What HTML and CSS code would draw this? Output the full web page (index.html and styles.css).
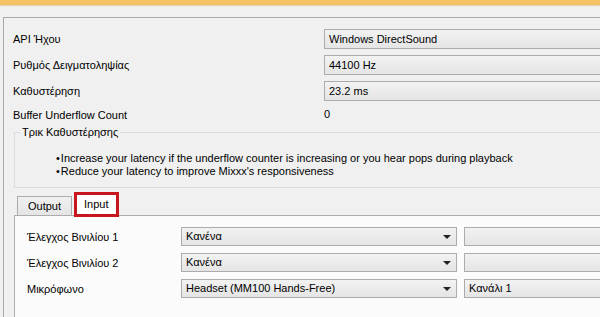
FILE: index.html
```html
<!DOCTYPE html>
<html lang="el">
<head>
    <meta charset="UTF-8">
    <meta name="viewport" content="width=device-width, initial-scale=1.0">
    <title>Ήχος</title>
    <link rel="stylesheet" href="styles.css">
</head>
<body>
    <div class="titlebar"></div>
    <div class="panel">
        <div class="form">
            <div class="label">API Ήχου</div>
            <div class="combo">Windows DirectSound</div>
            <div class="label">Ρυθμός Δειγματοληψίας</div>
            <div class="combo">44100 Hz</div>
            <div class="label">Καθυστέρηση</div>
            <div class="combo">23.2 ms</div>
            <div class="label short">Buffer Underflow Count</div>
            <div class="value">0</div>
        </div>

        <fieldset class="tips">
            <legend>Τρικ Καθυστέρησης</legend>
            <ul>
                <li>Increase your latency if the underflow counter is increasing or you hear pops during playback</li>
                <li>Reduce your latency to improve Mixxx's responsiveness</li>
            </ul>
        </fieldset>

        <div class="tabs">
            <div class="tab">Output</div>
            <div class="tab active">Input</div>
        </div>
        <div class="pane">
            <div class="io-row">
                <div class="label">Έλεγχος Βινιλίου 1</div>
                <div class="combo drop">Κανένα<span class="arrow"></span></div>
                <div class="combo"></div>
            </div>
            <div class="io-row">
                <div class="label">Έλεγχος Βινιλίου 2</div>
                <div class="combo drop">Κανένα<span class="arrow"></span></div>
                <div class="combo"></div>
            </div>
            <div class="io-row">
                <div class="label">Μικρόφωνο</div>
                <div class="combo drop">Headset (MM100 Hands-Free)<span class="arrow"></span></div>
                <div class="combo">Κανάλι 1</div>
            </div>
        </div>
    </div>
</body>
</html>
```

FILE: styles.css
```css
body {
    margin: 0;
    width: 600px;
    height: 317px;
    overflow: hidden;
    background-color: #f0f0f0;
    font-family: "Liberation Sans", Arial, sans-serif;
    font-size: 11px;
    color: #000;
}
.titlebar {
    height: 5px;
    background-color: #f3c366;
    border-bottom: 1px solid #e3d3b3;
}
.panel {
    width: 700px;
    height: 300px;
    margin: 11px 0 0 3px;
    border-top: 1px solid #a9a9a9;
    border-left: 1px solid #a9a9a9;
}
.form {
    display: grid;
    grid-template-columns: 311px 1fr;
    row-gap: 6px;
    padding: 11px 0 0 9px;
    align-items: center;
}
.combo {
    height: 18px;
    line-height: 18px;
    padding-left: 4px;
    border: 1px solid #acacac;
    background: linear-gradient(#f2f2f2, #e5e5e5);
    white-space: nowrap;
    overflow: hidden;
}
.value {
    height: 16px;
    line-height: 16px;
    margin-top: -1px;
}
.tips {
    margin: 4px 0 0 10px;
    padding: 0;
    border: 1px solid #dcdcdc;
    border-right: none;
    height: 60px;
}
.tips legend {
    margin-left: 5px;
    padding: 0 2px;
}
.tips ul {
    margin: 14px 0 0 41px;
    padding: 0;
    list-style: none;
    font-size: 11px;
    line-height: 13px;
}
.tips li::before {
    content: "•";
    margin-right: 1px;
}
.tabs {
    display: flex;
    align-items: flex-end;
    height: 21px;
    margin: 6px 0 0 13px;
}
.tab {
    height: 18px;
    line-height: 18px;
    padding: 0 10px;
    border: 1px solid #acacac;
    border-bottom: none;
    background: linear-gradient(#f0f0f0, #e5e5e5);
}
.tab.active {
    height: 19px;
    line-height: 19px;
    padding: 0 7px;
    margin-left: 2px;
    background: #fff;
    border: 3px solid #c8161d;
    margin-bottom: -2px;
    position: relative;
}
.pane {
    margin-left: 10px;
    height: 120px;
    border-top: 1px solid #acacac;
    border-left: 1px solid #acacac;
    background-color: #fbfbfb;
    padding: 11px 0 0 12px;
}
.io-row {
    display: grid;
    grid-template-columns: 147px 276px 200px;
    column-gap: 7px;
    align-items: center;
    margin-bottom: 7px;
}
.io-row .combo {
    height: 17px;
    line-height: 17px;
}
.drop {
    position: relative;
}
.arrow {
    position: absolute;
    right: 5px;
    top: 7px;
    border-left: 4px solid transparent;
    border-right: 4px solid transparent;
    border-top: 4px solid #222;
}
```
